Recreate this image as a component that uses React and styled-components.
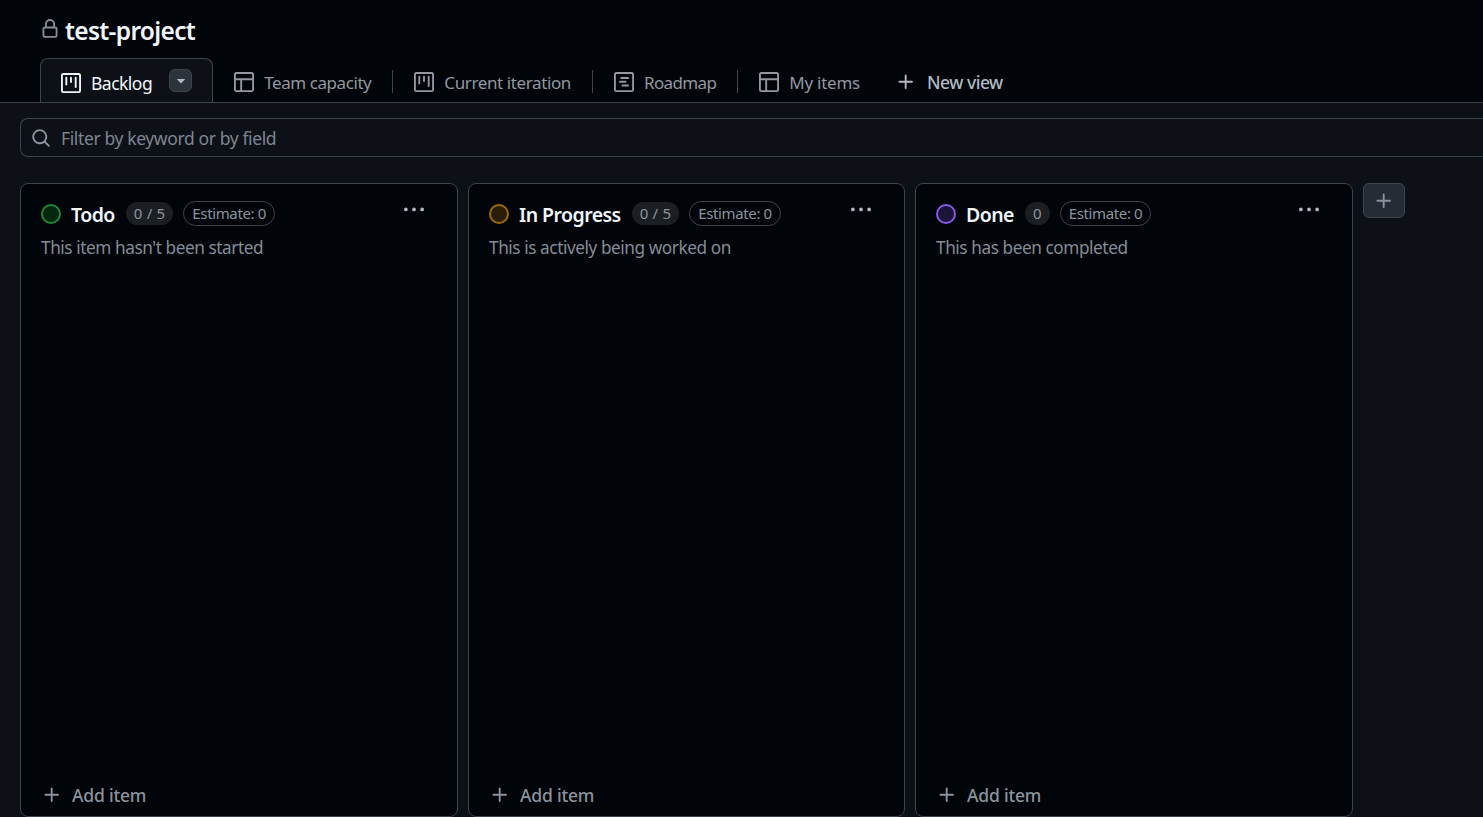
import React from "react";
import styled, { createGlobalStyle } from "styled-components";

const Global = createGlobalStyle`
  html, body { margin: 0; padding: 0; height: 100%; background: #0d1117; overflow: hidden; }
  #root { height: 100%; }
  * { box-sizing: border-box; }
`;

const Page = styled.div`
  width: 1483px; height: 817px; overflow: hidden;
  display: flex; flex-direction: column;
  background: #0d1117; color: #e6edf3;
  font-family: "Noto Sans", "Open Sans", sans-serif;
`;
const Header = styled.header`
  height: 103px; flex: none; background: #010409;
  border-bottom: 1px solid #3d444d;
  padding: 14px 0 0 40px;
  display: flex; flex-direction: column;
`;
const TitleRow = styled.div`
  display: flex; align-items: flex-start; gap: 4px; height: 44px;
  color: #848d97;
`;
const LockSlot = styled.span`
  display: flex; margin-top: 5px;
`;
const Title = styled.h1`
  margin: 0 0 0 1px; font-size: 24.5px; line-height: 34px; font-weight: 600; color: #f0f6fc;
  letter-spacing: -0.68px;
`;
const Tabs = styled.nav`
  display: flex; align-items: stretch; height: 45px;
`;
const Tab = styled.div`
  display: flex; align-items: center; gap: 10px;
  padding: 5px 21px 0 21px;
  color: ${p => (p.$active ? "#f0f6fc" : "#9198a1")};
  font-size: ${p => (p.$active ? "17.5px" : "17px")};
  letter-spacing: ${p => p.$track}px; white-space: nowrap;
  position: relative;
  ${p => p.$active && `
    background: #0d1117;
    border: 1px solid #3d444d; border-bottom: none;
    border-radius: 8px 8px 0 0;
    padding: 5px 20px 0 20px;
  `}
  ${p => p.$sep && `
    margin-right: 1px;
    &::after { content: ""; position: absolute; right: -1px; top: 12px; height: 23px; width: 1px; background: #3d444d; }
  `}
`;
const TabLabel = styled.span`
  margin-right: ${p => p.$mr || 0}px;
`;
const DropButton = styled.span`
  width: 23px; height: 23px; border-radius: 6px; background: #2d333b; border: 1px solid #3d444d;
  display: flex; align-items: center; justify-content: center; color: #b1bac4;
  margin-top: -5px;
`;
const NewView = styled.div`
  display: flex; align-items: center; gap: 11px; margin-left: 15px; padding-top: 5px;
  color: #b1bac4; font-size: 17.5px; font-weight: 500; letter-spacing: -0.5px;
`;
const Main = styled.main`
  flex: 1; min-height: 0; padding: 15px 0 0 20px; display: flex; flex-direction: column;
`;
const FilterBar = styled.div`
  width: 1480px; flex: none; height: 39px;
  border: 1px solid #3d444d; border-radius: 8px 0 0 8px; border-right: none;
  display: flex; align-items: center; gap: 10px; padding-left: 10px;
  color: #8b949e;
`;
const FilterText = styled.span`
  font-size: 17.5px; letter-spacing: -0.38px; color: #7d8590;
`;
const Board = styled.div`
  margin-top: 26px; flex: 1; min-height: 0; display: flex; gap: 10px; align-items: stretch;
`;
const Column = styled.section`
  width: ${p => p.$w}px; flex: none; height: 634px;
  background: #010409; border: 1px solid #3d444d; border-radius: 8px;
  display: flex; flex-direction: column; padding: 0 20px;
`;
const ColumnHead = styled.div`
  display: flex; align-items: center; height: 30px; margin-top: 15px;
`;
const StatusDot = styled.span`
  width: 20px; height: 20px; border-radius: 50%; flex: none;
  border: 2px solid ${p => p.$c}; background: ${p => p.$bg};
`;
const ColumnName = styled.h2`
  margin: 0 0 0 10px; font-size: 19.5px; font-weight: 600; color: #f0f6fc; letter-spacing: -0.55px;
`;
const Count = styled.span`
  margin-left: 11px; height: 23px; padding: 0 8px; border-radius: 12px; background: #1b1f24;
  font-size: 15px; line-height: 22px; color: #8b949e; white-space: nowrap; margin-top: -2px;
  letter-spacing: 0.2px;
`;
const Estimate = styled.span`
  margin-left: 10px; height: 25px; padding: 0 8px; border-radius: 13px; border: 1px solid #3d444d;
  font-size: 15px; line-height: 23px; color: #8b949e; white-space: nowrap; letter-spacing: -0.37px; margin-top: -2px;
`;
const Kebab = styled.span`
  margin-left: auto; margin-right: 13px; margin-top: -8px; color: #b1bac4; display: flex;
`;
const Description = styled.p`
  margin: 7px 0 0; font-size: 17.2px; line-height: 24px; color: #848d97; letter-spacing: -0.42px;
`;
const AddItem = styled.div`
  margin-top: auto; margin-bottom: 9px; padding-left: 1px;
  display: flex; align-items: center; gap: 10px;
  color: #8b949e; font-size: 17.5px; font-weight: 500; letter-spacing: -0.2px;
`;
const AddColumn = styled.button`
  width: 42px; height: 35px; flex: none; padding: 0;
  background: #262c36; border: 1px solid #3d444d; border-radius: 6px; color: #8b949e;
  display: flex; align-items: center; justify-content: center;
`;

const paths = {
  lock: "M4 4a4 4 0 0 1 8 0v2h.25c.966 0 1.75.784 1.75 1.75v5.5A1.75 1.75 0 0 1 12.25 15h-8.5A1.75 1.75 0 0 1 2 13.25v-5.5C2 6.784 2.784 6 3.75 6H4Zm8.25 3.5h-8.5a.25.25 0 0 0-.25.25v5.5c0 .138.112.25.25.25h8.5a.25.25 0 0 0 .25-.25v-5.5a.25.25 0 0 0-.25-.25ZM10.5 6V4a2.5 2.5 0 1 0-5 0v2Z",
  project: "M1.75 0h12.5C15.216 0 16 .784 16 1.75v12.5A1.75 1.75 0 0 1 14.25 16H1.75A1.75 1.75 0 0 1 0 14.25V1.75C0 .784.784 0 1.75 0ZM1.5 1.75v12.5c0 .138.112.25.25.25h12.5a.25.25 0 0 0 .25-.25V1.75a.25.25 0 0 0-.25-.25H1.75a.25.25 0 0 0-.25.25ZM11.75 3a.75.75 0 0 1 .75.75v7.5a.75.75 0 0 1-1.5 0v-7.5a.75.75 0 0 1 .75-.75Zm-8.25.75a.75.75 0 0 1 1.5 0v5.5a.75.75 0 0 1-1.5 0ZM8 3a.75.75 0 0 1 .75.75v3.5a.75.75 0 0 1-1.5 0v-3.5A.75.75 0 0 1 8 3Z",
  table: "M0 1.75C0 .784.784 0 1.75 0h12.5C15.216 0 16 .784 16 1.75v12.5A1.75 1.75 0 0 1 14.25 16H1.75A1.75 1.75 0 0 1 0 14.25ZM6.5 6.5v8h7.75a.25.25 0 0 0 .25-.25V6.5Zm8-1.5V1.75a.25.25 0 0 0-.25-.25H1.75a.25.25 0 0 0-.25.25V5Zm-13 1.5v7.75c0 .138.112.25.25.25H5v-8Z",
  roadmap: "M4.75 7a.75.75 0 0 0 0 1.5h4.5a.75.75 0 0 0 0-1.5h-4.5ZM5 4.75A.75.75 0 0 1 5.75 4h5.5a.75.75 0 0 1 0 1.5h-5.5A.75.75 0 0 1 5 4.75ZM6.75 10a.75.75 0 0 0 0 1.5h4.5a.75.75 0 0 0 0-1.5h-4.5ZM0 1.75C0 .784.784 0 1.75 0h12.5C15.216 0 16 .784 16 1.75v12.5A1.75 1.75 0 0 1 14.25 16H1.75A1.75 1.75 0 0 1 0 14.25V1.75Zm1.75-.25a.25.25 0 0 0-.25.25v12.5c0 .138.112.25.25.25h12.5a.25.25 0 0 0 .25-.25V1.75a.25.25 0 0 0-.25-.25H1.75Z",
  search: "M10.68 11.74a6 6 0 0 1-7.922-8.982 6 6 0 0 1 8.982 7.922l3.04 3.04a.749.749 0 0 1-.326 1.275.749.749 0 0 1-.734-.215ZM11.5 7a4.499 4.499 0 1 0-8.997 0A4.499 4.499 0 0 0 11.5 7Z",
  plus: "M7.75 2a.75.75 0 0 1 .75.75V7h4.25a.75.75 0 0 1 0 1.5H8.5v4.25a.75.75 0 0 1-1.5 0V8.5H2.75a.75.75 0 0 1 0-1.5H7V2.75A.75.75 0 0 1 7.75 2Z",
  kebab: "M8 9a1.5 1.5 0 1 0 0-3 1.5 1.5 0 0 0 0 3ZM1.5 9a1.5 1.5 0 1 0 0-3 1.5 1.5 0 0 0 0 3Zm13 0a1.5 1.5 0 1 0 0-3 1.5 1.5 0 0 0 0 3Z",
  triangle: "m4.427 7.427 3.396 3.396a.25.25 0 0 0 .354 0l3.396-3.396A.25.25 0 0 0 11.396 7H4.604a.25.25 0 0 0-.177.427Z",
};

const Icon = ({ name, size = 20 }) => (
  <svg width={size} height={size} viewBox="0 0 16 16" fill="currentColor" style={{ flex: "none" }} aria-hidden="true">
    <path d={paths[name]} />
  </svg>
);

const tabs = [
  { icon: "table", label: "Team capacity", sep: true, track: -0.43 },
  { icon: "project", label: "Current iteration", sep: true, track: -0.39 },
  { icon: "roadmap", label: "Roadmap", sep: true, track: -0.63 },
  { icon: "table", label: "My items", track: -0.24 },
];

const columns = [
  { name: "Todo", count: "0 / 5", desc: "This item hasn't been started", c: "#238636", bg: "#04260f", w: 438 },
  { name: "In Progress", count: "0 / 5", desc: "This is actively being worked on", c: "#9e6a03", bg: "#2a1d05", w: 437 },
  { name: "Done", count: "0", desc: "This has been completed", c: "#8957e5", bg: "#1b1537", w: 438 },
];

export default function App() {
  return (
    <Page>
      <Global />
      <Header>
        <TitleRow>
          <LockSlot><Icon name="lock" size={20} /></LockSlot>
          <Title>test-project</Title>
        </TitleRow>
        <Tabs>
          <Tab $active $track={-0.52}>
            <Icon name="project" />
            <TabLabel $mr={7}>Backlog</TabLabel>
            <DropButton><Icon name="triangle" size={18} /></DropButton>
          </Tab>
          {tabs.map(t => (
            <Tab key={t.label} $sep={t.sep} $track={t.track}>
              <Icon name={t.icon} />
              <TabLabel>{t.label}</TabLabel>
            </Tab>
          ))}
          <NewView><Icon name="plus" />New view</NewView>
        </Tabs>
      </Header>
      <Main>
        <FilterBar>
          <Icon name="search" />
          <FilterText>Filter by keyword or by field</FilterText>
        </FilterBar>
        <Board>
          {columns.map(col => (
            <Column key={col.name} $w={col.w}>
              <ColumnHead>
                <StatusDot $c={col.c} $bg={col.bg} />
                <ColumnName>{col.name}</ColumnName>
                <Count>{col.count}</Count>
                <Estimate>Estimate: 0</Estimate>
                <Kebab><Icon name="kebab" size={20} /></Kebab>
              </ColumnHead>
              <Description>{col.desc}</Description>
              <AddItem><Icon name="plus" />Add item</AddItem>
            </Column>
          ))}
          <AddColumn><Icon name="plus" /></AddColumn>
        </Board>
      </Main>
    </Page>
  );
}
